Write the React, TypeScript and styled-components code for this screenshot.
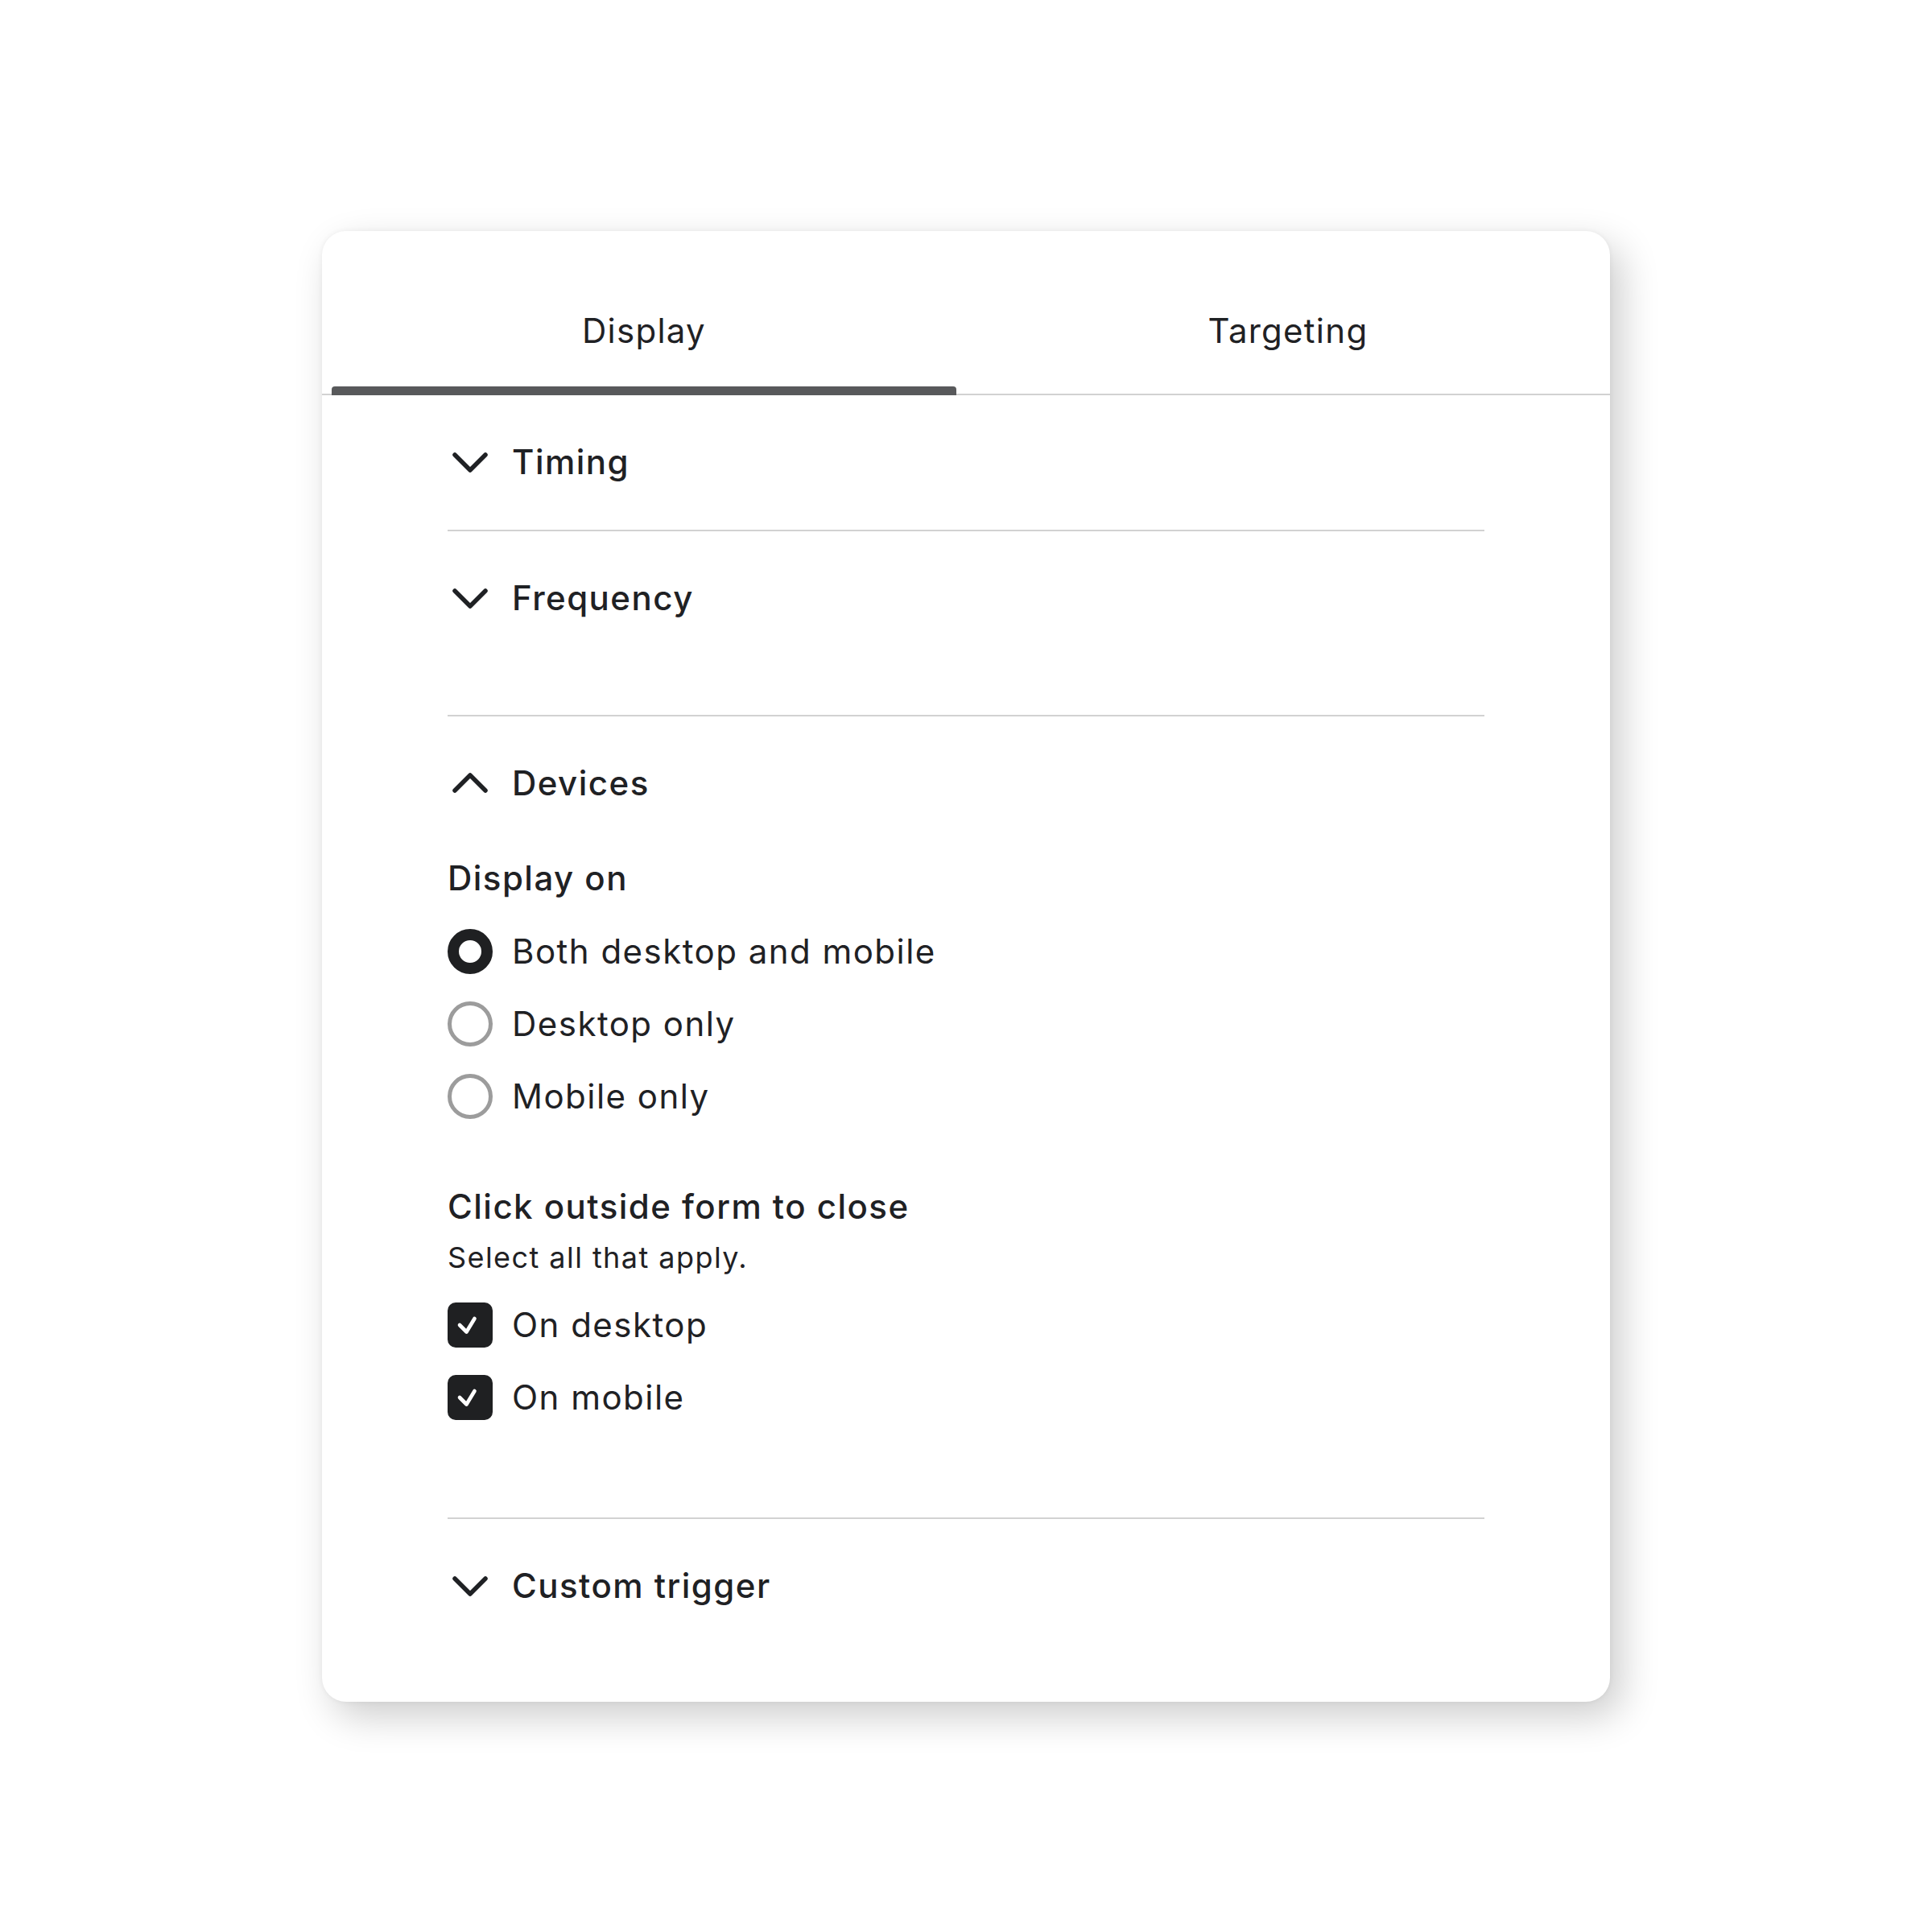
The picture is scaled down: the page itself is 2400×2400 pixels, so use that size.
import React, { useState } from 'react';
import styled, { createGlobalStyle, css } from 'styled-components';

const GlobalStyle = createGlobalStyle`
	html, body {
		margin: 0;
		padding: 0;
		background: #ffffff;
	}
	body {
		font-family: Inter, 'Noto Sans', 'Liberation Sans', sans-serif;
		color: #1f2124;
	}
`;

const Page = styled.div`
	width: 2400px;
	height: 2400px;
	display: flex;
	align-items: center;
	justify-content: center;
`;

const Card = styled.div`
	width: 1600px;
	background: #ffffff;
	border-radius: 30px;
	box-shadow: 14px 18px 48px rgba(0, 0, 0, 0.2), 0 0 6px rgba(0, 0, 0, 0.06);
	padding-bottom: 60px;
	overflow: hidden;
`;

const TabBar = styled.div`
	display: flex;
	border-bottom: 2px solid #d2d2d2;
`;

const Tab = styled.button<{ $active?: boolean }>`
	position: relative;
	flex: 1;
	margin: 0 12px;
	padding: 100px 0 54px;
	border: none;
	background: none;
	font-family: inherit;
	font-size: 42px;
	line-height: 48px;
	font-weight: 400;
	letter-spacing: 0.03em;
	color: #1f2124;
	cursor: pointer;

	${(p) =>
		p.$active &&
		css`
			&::after {
				content: '';
				position: absolute;
				left: 0;
				right: 0;
				bottom: -2px;
				height: 11px;
				background: #58595b;
				border-radius: 4px 4px 0 0;
			}
		`}
`;

const Body = styled.div`
	padding: 0 156px;
`;

const Section = styled.section<{ $last?: boolean; $pad?: number }>`
	padding-bottom: ${(p) => p.$pad || 0}px;
	border-bottom: ${(p) => (p.$last ? 'none' : '2px solid #d2d2d2')};
`;

const Header = styled.button`
	display: flex;
	align-items: center;
	gap: 24px;
	width: 100%;
	padding: 59px 0 60px;
	border: none;
	background: none;
	font-family: inherit;
	color: inherit;
	cursor: pointer;
	text-align: left;
`;

const Chevron = styled.svg<{ $open?: boolean }>`
	width: 56px;
	height: 48px;
	flex-shrink: 0;
	transform: ${(p) => (p.$open ? 'rotate(180deg)' : 'none')};
`;

const Title = styled.span`
	font-size: 42px;
	line-height: 48px;
	font-weight: 500;
	letter-spacing: 0.035em;
`;

const Label = styled.div<{ $mt?: number }>`
	margin-top: ${(p) => p.$mt || 0}px;
	font-size: 42px;
	line-height: 48px;
	font-weight: 500;
	letter-spacing: 0.035em;
`;

const Hint = styled.div`
	margin-top: 17px;
	font-size: 36px;
	line-height: 44px;
	font-weight: 400;
	letter-spacing: 0.04em;
`;

const OptionList = styled.div<{ $mt: number }>`
	display: flex;
	flex-direction: column;
	gap: 34px;
	margin-top: ${(p) => p.$mt}px;
`;

const Option = styled.label`
	display: flex;
	align-items: center;
	gap: 24px;
	height: 56px;
	font-size: 42px;
	line-height: 48px;
	font-weight: 400;
	letter-spacing: 0.035em;
	cursor: pointer;
`;

const Radio = styled.span<{ $checked?: boolean }>`
	box-sizing: border-box;
	width: 56px;
	height: 56px;
	flex-shrink: 0;
	border-radius: 50%;
	border: ${(p) => (p.$checked ? '14px solid #1f2022' : '5px solid #9c9c9c')};
	background: #ffffff;
`;

const Box = styled.span`
	width: 56px;
	height: 56px;
	flex-shrink: 0;
	border-radius: 10px;
	background: #1f2022;
	display: flex;
	align-items: center;
	justify-content: center;
`;

const ChevronIcon = ({ open }: { open?: boolean }) => (
	<Chevron $open={open} viewBox='0 0 56 48'>
		<path
			d='M9 15 L28 34 L47 15'
			fill='none'
			stroke='#1f2124'
			strokeWidth='5.5'
			strokeLinecap='round'
			strokeLinejoin='round'
		/>
	</Chevron>
);

const Check = () => (
	<Box>
		<svg width='56' height='56' viewBox='0 0 56 56'>
			<path
				d='M15 28 L23.5 36.5 L33.5 20'
				fill='none'
				stroke='#ffffff'
				strokeWidth='4.6'
				strokeLinecap='round'
				strokeLinejoin='round'
			/>
		</svg>
	</Box>
);

const radios = ['Both desktop and mobile', 'Desktop only', 'Mobile only'];
const checks = ['On desktop', 'On mobile'];

const App = () => {
	const [tab, setTab] = useState('display');
	const [device, setDevice] = useState(0);

	return (
		<Page>
			<GlobalStyle />
			<Card>
				<TabBar>
					<Tab $active={tab === 'display'} onClick={() => setTab('display')}>
						Display
					</Tab>
					<Tab $active={tab === 'targeting'} onClick={() => setTab('targeting')}>
						Targeting
					</Tab>
				</TabBar>

				<Body>
					<Section>
						<Header>
							<ChevronIcon />
							<Title>Timing</Title>
						</Header>
					</Section>

					<Section $pad={61}>
						<Header>
							<ChevronIcon />
							<Title>Frequency</Title>
						</Header>
					</Section>

					<Section $pad={121}>
						<Header>
							<ChevronIcon open />
							<Title>Devices</Title>
						</Header>

						<Label $mt={10}>Display on</Label>
						<OptionList $mt={39}>
							{radios.map((r, i) => (
								<Option key={r} onClick={() => setDevice(i)}>
									<Radio $checked={device === i} />
									{r}
								</Option>
							))}
						</OptionList>

						<Label $mt={85}>Click outside form to close</Label>
						<Hint>Select all that apply.</Hint>
						<OptionList $mt={34}>
							{checks.map((c) => (
								<Option key={c}>
									<Check />
									{c}
								</Option>
							))}
						</OptionList>
					</Section>

					<Section $last>
						<Header>
							<ChevronIcon />
							<Title>Custom trigger</Title>
						</Header>
					</Section>
				</Body>
			</Card>
		</Page>
	);
};

export default App;
